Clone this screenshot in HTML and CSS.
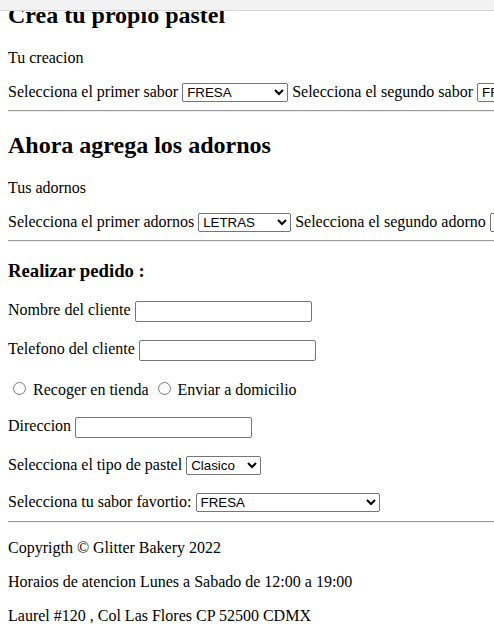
FILE: index.html
```html
<!DOCTYPE html>
<html lang="es">
<head>
<meta charset="utf-8">
<title>Glitter Bakery</title>
<link rel="stylesheet" href="styles.css">
</head>
<body>
<div class="topbar"></div>
<main class="page">
  <h2 class="first">Crea tu propio pastel</h2>
  <p>Tu creacion</p>
  <div class="row">
    <label class="lbl" for="sabor1">Selecciona el primer sabor</label>
    <select id="sabor1" class="sel sel-sabor"><option>FRESA</option><option>CHOCOLATE</option><option>VAINILLA</option></select>
    <label class="lbl" for="sabor2">Selecciona el segundo sabor</label>
    <select id="sabor2" class="sel sel-sabor"><option>FRESA</option><option>CHOCOLATE</option><option>VAINILLA</option></select>
  </div>
  <hr>
  <h2>Ahora agrega los adornos</h2>
  <p>Tus adornos</p>
  <div class="row">
    <label class="lbl" for="adorno1">Selecciona el primer adornos</label>
    <select id="adorno1" class="sel sel-adorno"><option>LETRAS</option><option>FLORES</option><option>CHISPAS</option></select>
    <label class="lbl" for="adorno2">Selecciona el segundo adorno</label>
    <select id="adorno2" class="sel sel-adorno"><option>LETRAS</option><option>FLORES</option><option>CHISPAS</option></select>
  </div>
  <hr>
  <h3>Realizar pedido :</h3>
  <p class="field field-input"><label class="lbl" for="nombre">Nombre del cliente</label><input id="nombre" type="text" class="txt"></p>
  <p class="field field-input"><label class="lbl" for="tel">Telefono del cliente</label><input id="tel" type="text" class="txt"></p>
  <p class="field field-radio"><label class="opt"><input type="radio" name="entrega"> Recoger en tienda</label><label class="opt"><input type="radio" name="entrega"> Enviar a domicilio</label></p>
  <p class="field field-input"><label class="lbl" for="dir">Direccion</label><input id="dir" type="text" class="txt"></p>
  <p class="field field-select"><label class="lbl" for="tipo">Selecciona el tipo de pastel</label><select id="tipo" class="sel sel-tipo"><option>Clasico</option><option>Fondant</option></select></p>
  <div class="field field-last"><label class="lbl" for="fav">Selecciona tu sabor favortio:</label><select id="fav" class="sel sel-fav"><option>FRESA</option><option>CHOCOLATE</option></select></div>
  <hr>
  <footer>
    <p>Copyrigth © Glitter Bakery 2022</p>
    <p>Horaios de atencion Lunes a Sabado de 12:00 a 19:00</p>
    <p>Laurel #120 , Col Las Flores CP 52500 CDMX</p>
  </footer>
</main>
</body>
</html>
```
FILE: styles.css
```css
html {
  overflow: hidden;
}
body {
  margin: 0 0 0 8px;
  font-family: "Liberation Serif", "Times New Roman", serif;
  font-size: 16px;
  color: #000;
  background: #fff;
}
.topbar {
  position: fixed;
  top: 0;
  left: 0;
  right: 0;
  height: 10px;
  background: #f2f2f2;
  border-bottom: 1px solid #d6d6d6;
}
h2 {
  font-size: 24px;
  margin: 19.92px 0;
}
h2.first {
  margin-top: 2px;
}
h3 {
  font-size: 18.72px;
  margin: 18.72px 0;
}
p {
  margin: 16px 0;
}
hr {
  margin: 8px 0;
  border: 0;
  border-top: 1px solid #9a9a9a;
  border-bottom: 1px solid #eee;
}
.row {
  display: flex;
  align-items: flex-start;
  gap: 4px;
  height: 19px;
  white-space: nowrap;
  overflow: hidden;
}
.row .lbl {
  line-height: 17px;
}
.field {
  display: flex;
  align-items: flex-start;
  gap: 4px;
  white-space: nowrap;
}
.field-input { height: 23px; }
.field-radio { height: 22px; }
.field-select { height: 21px; }
.field-last { height: 20px; margin: 0; }
.sel, .txt {
  font-family: "Liberation Sans", Arial, sans-serif;
  font-size: 13.333px;
  color: #000;
  margin: 0;
  box-sizing: border-box;
}
.sel {
  height: 19px;
  flex-shrink: 0;
}
.sel-sabor { width: 106px; }
.sel-adorno { width: 93px; }
.sel-tipo { width: 75px; }
.sel-fav { width: 184px; }
.txt {
  width: 177px;
  height: 21px;
  padding: 1px 2px;
  border: 1px solid #767676;
  border-radius: 2px;
  background: #fff;
}
.opt input {
  margin: 3px 3px 0 5px;
}
```
